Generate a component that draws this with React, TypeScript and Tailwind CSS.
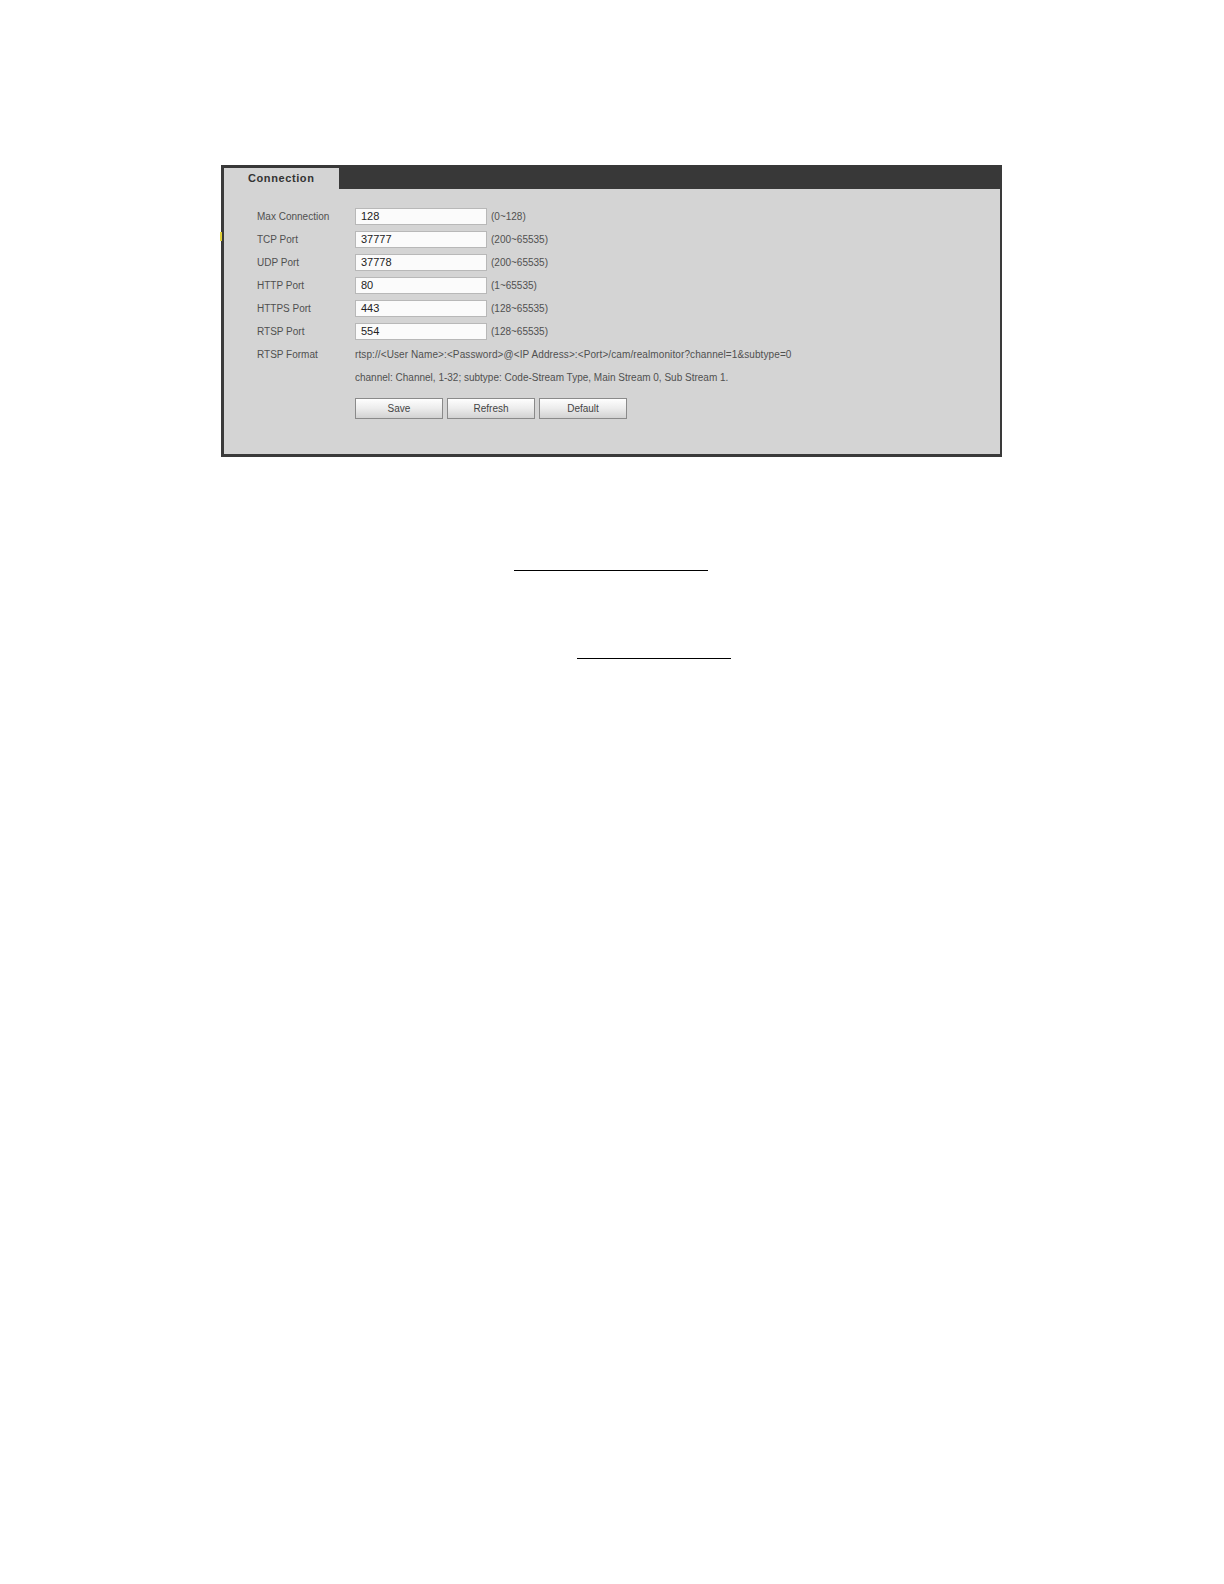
import React from "react";

type Row = {
    label: string;
    value: string;
    range: string;
};

const rows: Row[] = [
    { label: "Max Connection", value: "128", range: "(0~128)" },
    { label: "TCP Port", value: "37777", range: "(200~65535)" },
    { label: "UDP Port", value: "37778", range: "(200~65535)" },
    { label: "HTTP Port", value: "80", range: "(1~65535)" },
    { label: "HTTPS Port", value: "443", range: "(128~65535)" },
    { label: "RTSP Port", value: "554", range: "(128~65535)" },
];

function PanelButton({ children }: { children: React.ReactNode }) {
    return (
        <button
            type="button"
            className="h-[21px] w-[88px] border border-[#8a8a8a] bg-gradient-to-b from-[#fefefe] via-[#ececec] to-[#d2d2d2] text-[10px] text-[#444]"
        >
            {children}
        </button>
    );
}

function ConnectionPanel() {
    return (
        <div className="relative ml-[221px] h-[292px] w-[781px] border-b-[3px] border-l-[3px] border-r-[2px] border-[#3a3a3a] bg-[#d4d4d4]">
            {/* little yellow marker at the left edge */}
            <span className="absolute left-[-4px] top-[67px] h-[9px] w-[2px] bg-[#e2d13a]" />

            <div className="h-[24px] bg-[#383838] pt-[3px]">
                <div className="flex h-[21px] w-[115px] items-center bg-[#d4d4d4] pl-[24px] text-[11px] font-bold tracking-[0.6px] text-[#333]">
                    Connection
                </div>
            </div>

            <div className="flex flex-col gap-[6px] pl-[33px] pt-[19px] text-[10px] text-[#505050]">
                {rows.map((r) => (
                    <div key={r.label} className="flex h-[17px] items-center">
                        <div className="w-[98px]">{r.label}</div>
                        <div className="flex h-[17px] w-[132px] items-center border border-[#b8b8b8] bg-[#fbfbfb] pl-[5px] text-[11px] text-[#222]">
                            {r.value}
                        </div>
                        <div className="pl-[4px]">{r.range}</div>
                    </div>
                ))}
                <div className="flex h-[17px] items-center">
                    <div className="w-[98px]">RTSP Format</div>
                    <div className="tracking-[0.1px]">
                        rtsp://&lt;User Name&gt;:&lt;Password&gt;@&lt;IP Address&gt;:&lt;Port&gt;/cam/realmonitor?channel=1&amp;subtype=0
                    </div>
                </div>
                <div className="flex h-[17px] items-center pl-[98px]">
                    channel: Channel, 1-32; subtype: Code-Stream Type, Main Stream 0, Sub Stream 1.
                </div>
                <div className="mt-[6px] flex gap-[4px] pl-[98px]">
                    <PanelButton>Save</PanelButton>
                    <PanelButton>Refresh</PanelButton>
                    <PanelButton>Default</PanelButton>
                </div>
            </div>
        </div>
    );
}

export default function App() {
    return (
        <div
            className="min-h-[1584px] w-[1224px] bg-white pt-[165px]"
            style={{ fontFamily: '"Liberation Sans", Arial, sans-serif' }}
        >
            <ConnectionPanel />
            <div className="ml-[514px] mt-[113px] h-px w-[194px] bg-black" />
            <div className="ml-[577px] mt-[87px] h-px w-[154px] bg-black" />
        </div>
    );
}
